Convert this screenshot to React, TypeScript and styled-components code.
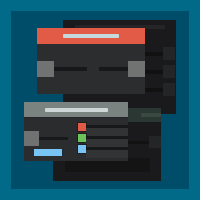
import React from 'react';
import styled, { createGlobalStyle } from 'styled-components';

const GlobalStyle = createGlobalStyle`
  html, body {
    margin: 0;
    padding: 0;
    background: #006a88;
    font-family: "Liberation Sans", Arial, sans-serif;
  }
`;

const Frame = styled.div`
  width: 200px;
  height: 200px;
  padding: 11px;
  box-sizing: border-box;
  background: #006a88;
`;

const Desktop = styled.div`
  position: relative;
  width: 178px;
  height: 178px;
  background: #004d69;
  overflow: hidden;
`;

const Window = styled.div<{ $x: number; $y: number; $w: number; $h: number; $bg: string }>`
  position: absolute;
  left: ${p => p.$x}px;
  top: ${p => p.$y}px;
  width: ${p => p.$w}px;
  height: ${p => p.$h}px;
  background: ${p => p.$bg};
  display: flex;
  flex-direction: column;
`;

const Header = styled.div<{ $h: number; $bg: string; $pad: number }>`
  height: ${p => p.$h}px;
  flex: none;
  background: ${p => p.$bg};
  display: flex;
  align-items: center;
  padding-left: ${p => p.$pad}px;
`;

const Pill = styled.div<{ $w: number; $bg: string }>`
  width: ${p => p.$w}px;
  height: 4px;
  border-radius: 1px;
  background: ${p => p.$bg};
`;

const Body = styled.div`
  flex: 1;
  display: flex;
  flex-direction: column;
`;

const Square = styled.div<{ $w: number; $h: number; $bg: string }>`
  width: ${p => p.$w}px;
  height: ${p => p.$h}px;
  flex: none;
  background: ${p => p.$bg};
`;

const Line = styled.div<{ $w?: number; $h?: number; $bg?: string }>`
  ${p => (p.$w ? `width: ${p.$w}px; flex: none;` : 'flex: 1;')}
  height: ${p => p.$h ?? 4}px;
  background: ${p => p.$bg ?? '#161719'};
`;

/* back window, top */
const BackTopBody = styled(Body)`
  padding-top: 5px;
  gap: 3px;
`;

const FaintBar = styled.div`
  margin-left: 12px;
  width: 90px;
  height: 4px;
  background: #252527;
`;

const BackRows = styled.div`
  margin-top: 15px;
  display: flex;
  flex-direction: column;
  gap: 5px;
  padding-right: 1px;
`;

const BackRow = styled.div`
  display: flex;
  align-items: center;
  height: 13px;
`;

/* back window, bottom */
const BackBottomBody = styled(Body)`
  padding-top: 14px;
`;

const BackBottomRow = styled.div`
  display: flex;
  align-items: center;
  justify-content: flex-end;
  height: 12px;
`;

const DarkSlab = styled.div`
  margin: 10px 0 0 12px;
  width: 85px;
  height: 14px;
  background: #141415;
`;

/* front window, top */
const FrontTopBody = styled(Body)`
  padding-top: 17px;
`;

const SquareRow = styled.div`
  display: flex;
  align-items: center;
`;

const Gap = styled.div<{ $w: number }>`
  width: ${p => p.$w}px;
  flex: none;
`;

/* front window, bottom */
const FrontBottomBody = styled.div`
  flex: 1;
  display: grid;
  grid-template-columns: 54px 1fr;
  border-top: 1px solid #222426;
`;

const LeftCol = styled.div`
  display: flex;
  flex-direction: column;
  padding-top: 13px;
`;

const LeftRow = styled.div`
  display: flex;
  align-items: center;
`;

const BlueBar = styled.div`
  margin: 3px 0 0 10px;
  width: 28px;
  height: 7px;
  background: #78c5f5;
  border-right: 1px solid #1d2a33;
`;

const RightCol = styled.div`
  display: flex;
  flex-direction: column;
  padding-top: 5px;
  gap: 3px;
`;

const ColorRow = styled.div`
  display: flex;
  align-items: flex-start;
  height: 8px;
  padding-top: 0;
`;

const Swatch = styled.div<{ $bg: string }>`
  width: 8px;
  height: 8px;
  flex: none;
  background: ${p => p.$bg};
  box-shadow: 0 0 0 1px #1e2022;
`;

const RowTrack = styled.div`
  flex: 1;
  height: 11px;
  margin-top: 2px;
  background: linear-gradient(#17181a 0 3px, #313335 3px 100%);
`;

export default function App() {
  return (
    <>
      <GlobalStyle />
      <Frame>
        <Desktop>
          <Window $x={52} $y={9} $w={113} $h={94} $bg="#1a1a1c">
            <BackTopBody>
              <FaintBar />
              <BackRows>
                {[0, 1, 2].map(i => (
                  <BackRow key={i}>
                    <Line $bg="#111112" $h={4} />
                    <Square $w={12} $h={13} $bg="#242527" />
                  </BackRow>
                ))}
              </BackRows>
            </BackTopBody>
          </Window>

          <Window $x={42} $y={97} $w={108} $h={73} $bg="#1a1a1c">
            <Header $h={14} $bg="#2b3732" $pad={88}>
              <Pill $w={20} $bg="#3a4a43" />
            </Header>
            <BackBottomBody>
              <BackBottomRow>
                <Line $w={30} $h={3} $bg="#121213" />
                <Square $w={12} $h={12} $bg="#242527" />
              </BackBottomRow>
              <DarkSlab />
            </BackBottomBody>
          </Window>

          <Window $x={26} $y={17} $w={108} $h={66} $bg="#2b2d2f">
            <Header $h={16} $bg="#e25b47" $pad={26}>
              <Pill $w={56} $bg="#c5dadd" />
            </Header>
            <FrontTopBody>
              <SquareRow>
                <Square $w={17} $h={16} $bg="#717272" />
                <Line $w={33} $h={4} $bg="#17181a" />
                <Gap $w={12} />
                <Line $w={29} $h={4} $bg="#17181a" />
                <Square $w={17} $h={16} $bg="#717272" />
              </SquareRow>
            </FrontTopBody>
          </Window>

          <Window $x={13} $y={91} $w={104} $h={59} $bg="#2a2c2e">
            <Header $h={15} $bg="#7b8381" $pad={21}>
              <Pill $w={63} $bg="#cfd6d6" />
            </Header>
            <FrontBottomBody>
              <LeftCol>
                <LeftRow>
                  <Square $w={15} $h={15} $bg="#707171" />
                  <Line $w={29} $h={3} $bg="#18191b" />
                </LeftRow>
                <BlueBar />
              </LeftCol>
              <RightCol>
                {['#e05a47', '#6cc35b', '#78c5f5'].map(c => (
                  <ColorRow key={c}>
                    <Swatch $bg={c} />
                    <RowTrack />
                  </ColorRow>
                ))}
              </RightCol>
            </FrontBottomBody>
          </Window>
        </Desktop>
      </Frame>
    </>
  );
}
